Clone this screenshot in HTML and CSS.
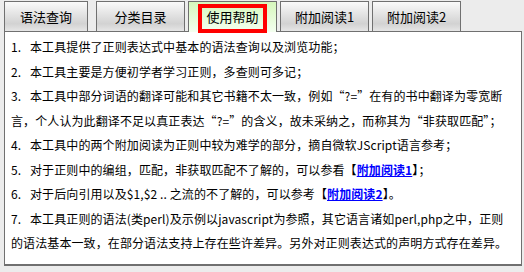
FILE: index.html
```html
<!DOCTYPE html>
<html lang="zh-CN">
<head>
    <meta charset="UTF-8">
    <title>正则表达式 使用帮助</title>
    <link rel="stylesheet" href="styles.css">
</head>
<body>

    <div class="wrap">
        <!-- Tabs -->
        <ul class="tabs">
            <li class="tab">语法查询</li>
            <li class="tab">分类目录</li>
            <li class="tab active"><span class="mark">使用帮助</span></li>
            <li class="tab">附加阅读1</li>
            <li class="tab">附加阅读2</li>
        </ul>

        <!-- Help content -->
        <div class="panel">
            <p><span class="num">1.</span>本工具提供了正则表达式中基本的语法查询以及浏览功能；</p>
            <p><span class="num">2.</span>本工具主要是方便初学者学习正则，多查则可多记；</p>
            <p><span class="num">3.</span>本工具中部分词语的翻译可能和其它书籍不太一致，例如“?=”在有的书中翻译为零宽断<br>言，个人认为此翻译不足以真正表达“?=”的含义，故未采纳之，而称其为“非获取匹配”；</p>
            <p><span class="num">4.</span>本工具中的两个附加阅读为正则中较为难学的部分，摘自微软JScript语言参考；</p>
            <p><span class="num">5.</span>对于正则中的编组，匹配，非获取匹配不了解的，可以参看【<a href="#" class="read">附加阅读1</a>】；</p>
            <p><span class="num">6.</span>对于后向引用以及$1,$2 .. 之流的不了解的，可以参考【<a href="#" class="read">附加阅读2</a>】。</p>
            <p><span class="num">7.</span>本工具正则的语法(类perl)及示例以javascript为参照，其它语言诸如perl,php之中，正则<br>的语法基本一致，在部分语法支持上存在些许差异。另外对正则表达式的声明方式存在差异。</p>
        </div>
    </div>

</body>
</html>
```

FILE: styles.css
```css
/* General */
body {
    margin: 0;
    background-color: #ececec;
    font-family: "Noto Sans CJK SC", "DejaVu Sans", sans-serif;
    font-size: 12px;
    color: #000;
}

.wrap {
    padding: 1px 2px 0 4px;
}

/* Tabs */
.tabs {
    list-style: none;
    margin: 0;
    padding: 0;
    display: flex;
    gap: 3px;
    position: relative;
    z-index: 1;
}

.tab {
    width: 87px;
    height: 29px;
    line-height: 29px;
    text-align: center;
    font-size: 13px;
    border: 1px solid #707070;
    background: linear-gradient(#fafafa, #d2d2d2 75%, #e6e6e6);
}

.tab:first-child {
    width: 82px;
    margin-right: 5px;
}

.tab.active {
    position: relative;
    height: 30px;
    border-bottom: none;
    background: linear-gradient(#d6f7bc, #f4fff0);
}

/* red highlight box around the active tab label */
.mark::after {
    content: "";
    position: absolute;
    left: 9px;
    top: 2px;
    width: 61px;
    height: 21px;
    border: 4px solid #f00;
}

/* Panel */
.panel {
    margin-top: -1px;
    background-color: #fff;
    border: 1px solid #707070;
    border-bottom-width: 2px;
    padding: 3px 4px 0 6px;
    height: 229px;
    overflow: hidden;
}

.panel p {
    margin: 0;
    height: auto;
    line-height: 24.5px;
    letter-spacing: 0.1px;
    white-space: nowrap;
}

.num {
    display: inline-block;
    width: 19px;
    vertical-align: top;
}

.read {
    color: #0000ff;
    font-weight: bold;
    text-decoration: underline;
}
```
